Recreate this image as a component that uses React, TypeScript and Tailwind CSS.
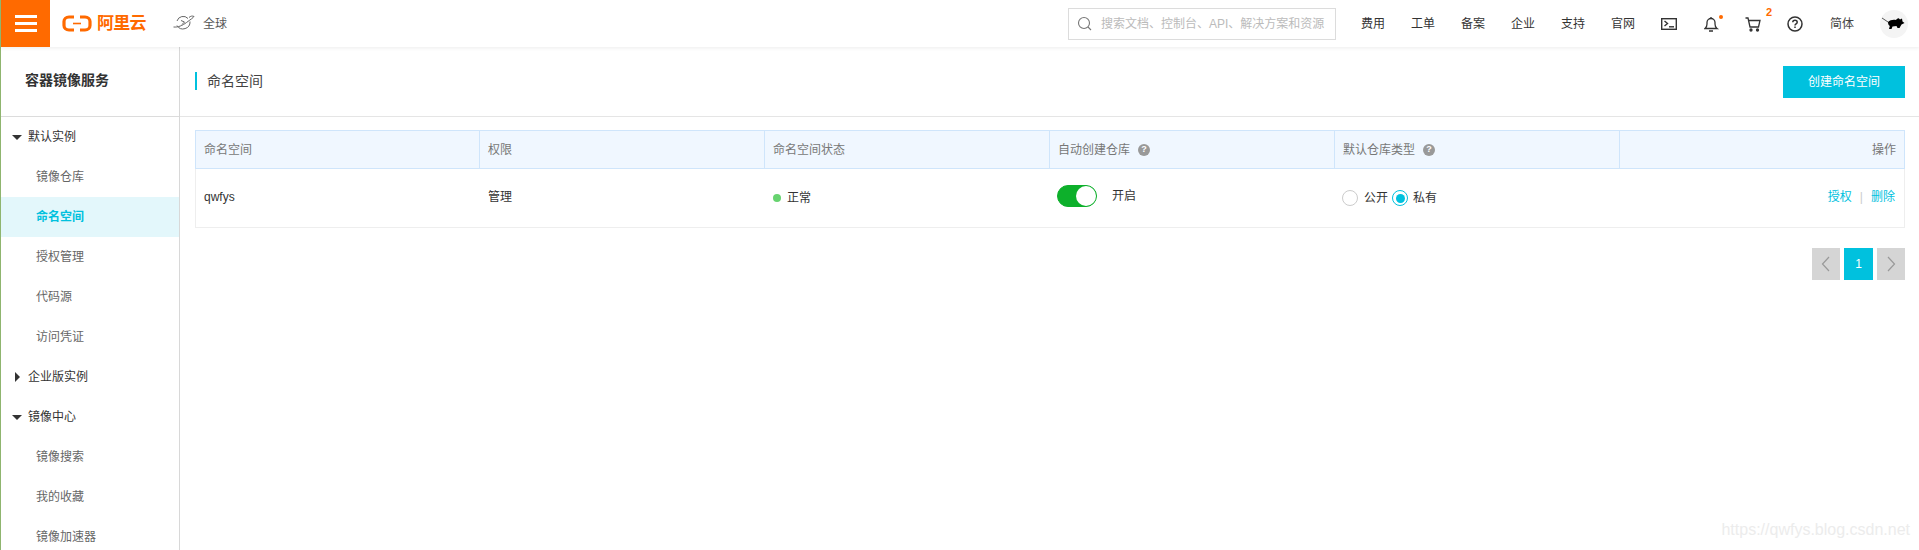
import React from "react";

function Logo() {
  return (
    <div className="flex items-center gap-[5px] text-[#ff6a00]">
      <svg width="30" height="17" viewBox="0 0 30 17" fill="none">
        <path d="M12 2H7C4 2 2 4 2 6.500v4C2 13 4 15 7 15h5" stroke="#ff6a00" strokeWidth="3.200" />
        <path d="M18 2h5c3 0 5 2 5 4.500v4c0 2.500-2 4.500-5 4.500h-5" stroke="#ff6a00" strokeWidth="3.200" />
        <path d="M11 8.500h8" stroke="#ff6a00" strokeWidth="1.600" />
      </svg>
      <span className="text-[17px] font-bold leading-none tracking-[-0.7px]">阿里云</span>
    </div>
  );
}

function Planet() {
  return (
    <svg width="22" height="17" viewBox="0 0 22 17" fill="none" stroke="#666" strokeWidth="1">
      <path d="M4 6A6.500 6.500 0 0 1 15 3.500" />
      <path d="M4 10.500a7 7 0 0 0 13-4" />
      <path d="M0.500 12c4.500.5 9-1.500 13-4.500S20 3 21 1.500c-1.500-.8-3.500-.5-5 1" />
      <path d="M8 5.500l3.500 1.500-2.500 2.500" />
    </svg>
  );
}

function TopBar() {
  const links = ["费用", "工单", "备案", "企业", "支持", "官网"];
  return (
    <header className="h-[47px] flex items-center bg-white shadow-[0_1px_4px_rgba(0,0,0,0.08)] relative z-10 shrink-0">
      <div className="w-[50px] h-[47px] bg-[#ff6a00] flex flex-col items-center justify-center gap-[4px] border-l border-[#8fb56f]">
        <span className="block w-[22px] h-[3px] bg-white" />
        <span className="block w-[22px] h-[3px] bg-white" />
        <span className="block w-[22px] h-[3px] bg-white" />
      </div>
      <div className="ml-[12px]"><Logo /></div>
      <div className="ml-[27px] flex items-center gap-[8px]">
        <Planet />
        <span className="text-[12px] text-[#555]">全球</span>
      </div>
      <div className="ml-auto flex items-center">
        <div className="w-[268px] h-[32px] border border-[#dcdcdc] flex items-center pl-[8px] mr-[25px]">
          <svg width="15" height="15" viewBox="0 0 15 15" fill="none" stroke="#777" strokeWidth="1.100">
            <circle cx="7" cy="7" r="5.500" />
            <path d="M11 11l3 3" />
          </svg>
          <span className="ml-[9px] text-[12px] text-[#bbb] whitespace-nowrap leading-none">搜索文档、控制台、API、解决方案和资源</span>
        </div>
        <nav className="flex items-center text-[12px] text-[#333]">
          {links.map((l) => (
            <span key={l} className="w-[50px] whitespace-nowrap">{l}</span>
          ))}
        </nav>
        <svg width="16" height="12" viewBox="0 0 16 12" fill="none" stroke="#333" strokeWidth="1.400" className="mr-[27px]">
          <rect x="0.700" y="0.700" width="14.600" height="10.600" />
          <path d="M3.500 3l3 2.500-3 2.500" />
          <path d="M8 8.800h5" />
        </svg>
        <span className="relative mr-[25px] block w-[16px] h-[16px]">
          <svg width="16" height="16" viewBox="1 0 16 16" fill="none" stroke="#333" strokeWidth="1.300">
            <path d="M2 12.500c1.500-1 2-2 2-4.500V6.500a4 4 0 0 1 8 0V8c0 2.500.5 3.500 2 4.500z" />
            <path d="M8 1v1.500M6 15h4" />
          </svg>
          <span className="absolute -right-[3px] -top-[1px] w-[4px] h-[4px] rounded-full bg-[#ff6a00]" />
        </span>
        <span className="relative mr-[26px] block w-[16px] h-[16px]">
          <svg width="16" height="16" viewBox="0 0 16 16" fill="none" stroke="#333" strokeWidth="1.300">
            <path d="M0.500 2h2.500l2 9h8.500l1.500-6.500H3.500" />
            <circle cx="6" cy="14" r="1" fill="#333" />
            <circle cx="12.500" cy="14" r="1" fill="#333" />
          </svg>
          <span className="absolute -right-[11px] -top-[9px] text-[11px] font-bold text-[#ff6a00] leading-none">2</span>
        </span>
        <svg width="16" height="16" viewBox="0 0 16 16" fill="none" stroke="#333" strokeWidth="1.500" className="mr-[27px]">
          <circle cx="8" cy="8" r="7" />
          <path d="M5.800 6.200C5.800 5 6.800 4.200 8 4.200s2.200.8 2.200 2c0 1.600-2.200 1.700-2.200 3.300" />
          <path d="M8 10.500v1.500" />
        </svg>
        <span className="text-[12px] text-[#444] w-[50px] whitespace-nowrap">简体</span>
        <div className="w-[28px] h-[28px] rounded-full bg-[#f4f4f4] flex items-center justify-center mr-[11px]">
          <svg width="26" height="16" viewBox="0 0 26 16" fill="#000">
            <path d="M1 2l6 4" stroke="#555" strokeWidth="1" fill="none" />
            <path d="M7 6c2-2 5-2.500 8-2 1-1 2-2 3-1.500l1 1 2-1 .5 3 2 1.500-3 1.500-2 3.500h-2l-1-2-4 .5-1 2.500H8l.8-3C7.500 9 7 8 7 6z" />
          </svg>
        </div>
      </div>
    </header>
  );
}

function Caret({ open }: { open: boolean }) {
  return open ? (
    <span className="block w-0 h-0 border-l-[5px] border-r-[5px] border-t-[5px] border-l-transparent border-r-transparent border-t-[#333] ml-[11px] mr-[6px]" />
  ) : (
    <span className="block w-0 h-0 border-t-[5px] border-b-[5px] border-l-[5px] border-t-transparent border-b-transparent border-l-[#333] ml-[14px] mr-[8px]" />
  );
}

function Group({ label, open }: { label: string; open: boolean }) {
  return (
    <div className="h-[40px] flex items-center text-[12px] text-[#333]">
      <Caret open={open} />
      <span>{label}</span>
    </div>
  );
}

function Item({ label, active }: { label: string; active?: boolean }) {
  return (
    <div className={active
      ? "h-[40px] flex items-center pl-[35px] text-[12px] font-bold text-[#00c1de] bg-[#e3f7fb]"
      : "h-[40px] flex items-center pl-[35px] text-[12px] text-[#666]"}>
      {label}
    </div>
  );
}

function Sidebar() {
  return (
    <aside className="w-[180px] shrink-0 border-l border-[#8fb56f] border-r border-r-[#d8d8d8] overflow-hidden">
      <div className="h-[70px] flex items-center pl-[24px] pb-[2px] text-[14px] font-bold text-[#333] border-b border-[#dcdcdc]">容器镜像服务</div>
      <div>
        <Group label="默认实例" open />
        <Item label="镜像仓库" />
        <Item label="命名空间" active />
        <Item label="授权管理" />
        <Item label="代码源" />
        <Item label="访问凭证" />
        <Group label="企业版实例" open={false} />
        <Group label="镜像中心" open />
        <Item label="镜像搜索" />
        <Item label="我的收藏" />
        <Item label="镜像加速器" />
      </div>
    </aside>
  );
}

function Help() {
  return (
    <span className="ml-[8px] w-[12px] h-[12px] rounded-full bg-[#999] text-white text-[9px] font-bold flex items-center justify-center leading-none">?</span>
  );
}

function HeadCell({ children, right, last }: { children: React.ReactNode; right?: boolean; last?: boolean }) {
  return (
    <div className={`flex items-center px-[8px] text-[12px] text-[#777] ${right ? "justify-end" : ""} ${last ? "" : "border-r border-[#cfe5fb]"}`}>
      {children}
    </div>
  );
}

function Table() {
  return (
    <div className="border border-t-0 border-[#eeeeee]">
      <div className="grid grid-cols-[284px_285px_285px_285px_285px_1fr] h-[39px] bg-[#f0f7ff] border border-[#cfe5fb] -mx-px">
        <HeadCell>命名空间</HeadCell>
        <HeadCell>权限</HeadCell>
        <HeadCell>命名空间状态</HeadCell>
        <HeadCell>自动创建仓库<Help /></HeadCell>
        <HeadCell>默认仓库类型<Help /></HeadCell>
        <HeadCell right last>操作</HeadCell>
      </div>
      <div className="grid grid-cols-[284px_285px_285px_285px_285px_1fr] h-[58px] text-[12px] text-[#333]">
        <div className="flex items-center px-[8px] pb-[2px]">qwfys</div>
        <div className="flex items-center px-[8px] pb-[2px]">管理</div>
        <div className="flex items-center px-[8px]">
          <span className="w-[8px] h-[8px] rounded-full bg-[#67d36f] mr-[6px]" />正常
        </div>
        <div className="flex items-center px-[7px]">
          <span className="w-[40px] h-[22px] rounded-full bg-[#0db02b] border border-[#0db02b] flex items-center justify-end mr-[15px] -mt-[4px]">
            <span className="w-[20px] h-[20px] rounded-full bg-white" />
          </span>
          <span className="-mt-[4px]">开启</span>
        </div>
        <div className="flex items-center px-[7px]">
          <span className="w-[16px] h-[16px] rounded-full border border-[#ccc] mr-[6px]" />
          <span className="mr-[4px]">公开</span>
          <span className="w-[16px] h-[16px] rounded-full border border-[#00c1de] flex items-center justify-center mr-[5px]">
            <span className="w-[9px] h-[9px] rounded-full bg-[#00c1de]" />
          </span>
          <span>私有</span>
        </div>
        <div className="flex items-center justify-end pl-[8px] pr-[9px] pb-[2px] text-[#00c1de]">
          授权<span className="mx-[8px] text-[#ccc]">|</span>删除
        </div>
      </div>
    </div>
  );
}

function Pager() {
  return (
    <div className="flex justify-end mt-[20px] gap-[4px]">
      <span className="w-[28px] h-[32px] bg-[#d5d5d5] flex items-center justify-center">
        <svg width="10" height="16" viewBox="0 0 10 16" fill="none" stroke="#999" strokeWidth="1.200"><path d="M8 1L1.500 8 8 15" /></svg>
      </span>
      <span className="w-[29px] h-[32px] bg-[#00c1de] text-white text-[12px] flex items-center justify-center">1</span>
      <span className="w-[28px] h-[32px] bg-[#d5d5d5] flex items-center justify-center">
        <svg width="10" height="16" viewBox="0 0 10 16" fill="none" stroke="#999" strokeWidth="1.200"><path d="M2 1l6.500 7L2 15" /></svg>
      </span>
    </div>
  );
}

function Main() {
  return (
    <main className="flex-1 min-w-0">
      <div className="h-[70px] flex items-center justify-between pl-[15px] pr-[14px] border-b border-[#e5e5e5]">
        <div className="flex items-center h-[18px] mb-[1px] border-l-[2px] border-[#00c1de] pl-[10px] text-[14px] text-[#444]">命名空间</div>
        <div className="w-[122px] h-[32px] mt-[1px] bg-[#00c1de] text-white text-[12px] flex items-center justify-center">创建命名空间</div>
      </div>
      <div className="pt-[13px] pl-[15px] pr-[14px]">
        <Table />
        <Pager />
      </div>
    </main>
  );
}

export default function App() {
  return (
    <div className="relative h-[550px] w-[1919px] overflow-hidden bg-white flex flex-col font-['Liberation_Sans','Noto_Sans_CJK_SC',sans-serif]">
      <TopBar />
      <div className="flex flex-1 min-h-0">
        <Sidebar />
        <Main />
      </div>
      <div className="absolute right-[9px] bottom-[8px] text-[16px] text-[#ececec]">https://qwfys.blog.csdn.net</div>
    </div>
  );
}
